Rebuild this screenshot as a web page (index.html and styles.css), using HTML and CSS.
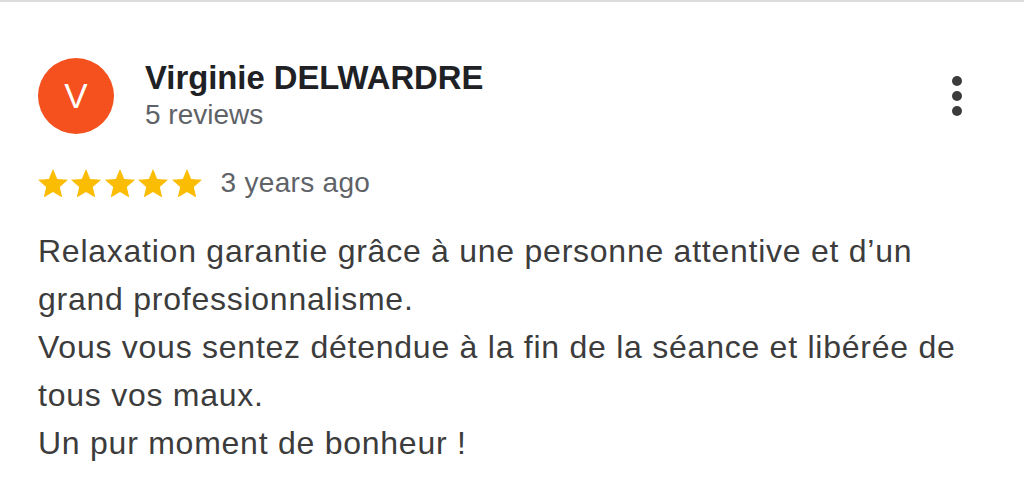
FILE: index.html
```html
<!DOCTYPE html>
<html lang="fr">
<head>
<meta charset="utf-8">
<link rel="stylesheet" href="styles.css">
</head>
<body>
<div class="review">
  <div class="header">
    <div class="avatar">V</div>
    <div class="who">
      <div class="name">Virginie DELWARDRE</div>
      <div class="count">5 reviews</div>
    </div>
    <div class="menu"><span></span><span></span><span></span></div>
  </div>
  <div class="rating">
    <div class="stars">
      <svg viewBox="2 2 20 19" class="star"><path d="M12 17.27L18.18 21l-1.64-7.03L22 9.24l-7.19-.61L12 2 9.19 8.63 2 9.24l5.46 4.73L5.82 21z"/></svg>
      <svg viewBox="2 2 20 19" class="star"><path d="M12 17.27L18.18 21l-1.64-7.03L22 9.24l-7.19-.61L12 2 9.19 8.63 2 9.24l5.46 4.73L5.82 21z"/></svg>
      <svg viewBox="2 2 20 19" class="star"><path d="M12 17.27L18.18 21l-1.64-7.03L22 9.24l-7.19-.61L12 2 9.19 8.63 2 9.24l5.46 4.73L5.82 21z"/></svg>
      <svg viewBox="2 2 20 19" class="star"><path d="M12 17.27L18.18 21l-1.64-7.03L22 9.24l-7.19-.61L12 2 9.19 8.63 2 9.24l5.46 4.73L5.82 21z"/></svg>
      <svg viewBox="2 2 20 19" class="star"><path d="M12 17.27L18.18 21l-1.64-7.03L22 9.24l-7.19-.61L12 2 9.19 8.63 2 9.24l5.46 4.73L5.82 21z"/></svg>
    </div>
    <span class="date">3 years ago</span>
  </div>
  <p class="text">Relaxation garantie grâce à une personne attentive et d’un grand professionnalisme.<br>Vous vous sentez détendue à la fin de la séance et libérée de tous vos maux.<br>Un pur moment de bonheur !</p>
</div>
</body>
</html>
```

FILE: styles.css
```css
html, body {
  margin: 0;
  padding: 0;
  background: #ffffff;
}
body {
  border-top: 2px solid #dcdcdc;
  font-family: "Liberation Sans", Arial, Helvetica, sans-serif;
  width: 1024px;
  height: 482px;
  overflow: hidden;
}
.review {
  padding: 56px 38px 0 38px;
}
.header {
  display: flex;
  align-items: flex-start;
}
.avatar {
  width: 76px;
  height: 76px;
  border-radius: 50%;
  background: #f4511e;
  color: #ffffff;
  font-size: 35px;
  line-height: 76px;
  text-align: center;
  flex: none;
}
.who {
  margin-left: 31px;
  padding-top: 2px;
  flex: 1;
}
.name {
  font-size: 32.8px;
  font-weight: bold;
  line-height: 36px;
  color: #202124;
}
.count {
  font-size: 28px;
  line-height: 38px;
  color: #5f6368;
}
.menu {
  display: flex;
  flex-direction: column;
  gap: 5px;
  margin-top: 18px;
  margin-right: 24px;
}
.menu span {
  width: 10px;
  height: 10px;
  border-radius: 50%;
  background: #3c3c3c;
}
.rating {
  display: flex;
  align-items: center;
  margin-top: 33px;
}
.stars {
  display: flex;
  gap: 3.4px;
  margin-right: 19px;
}
.star {
  width: 30px;
  height: 28.5px;
  fill: #fbbc04;
  display: block;
}
.date {
  font-size: 28px;
  line-height: 32px;
  letter-spacing: 0.3px;
  color: #5f6368;
}
.text {
  margin: 28px 0 0 0;
  width: 930px;
  font-size: 32px;
  letter-spacing: 0.75px;
  line-height: 48px;
  color: #3c3c3c;
}
```
